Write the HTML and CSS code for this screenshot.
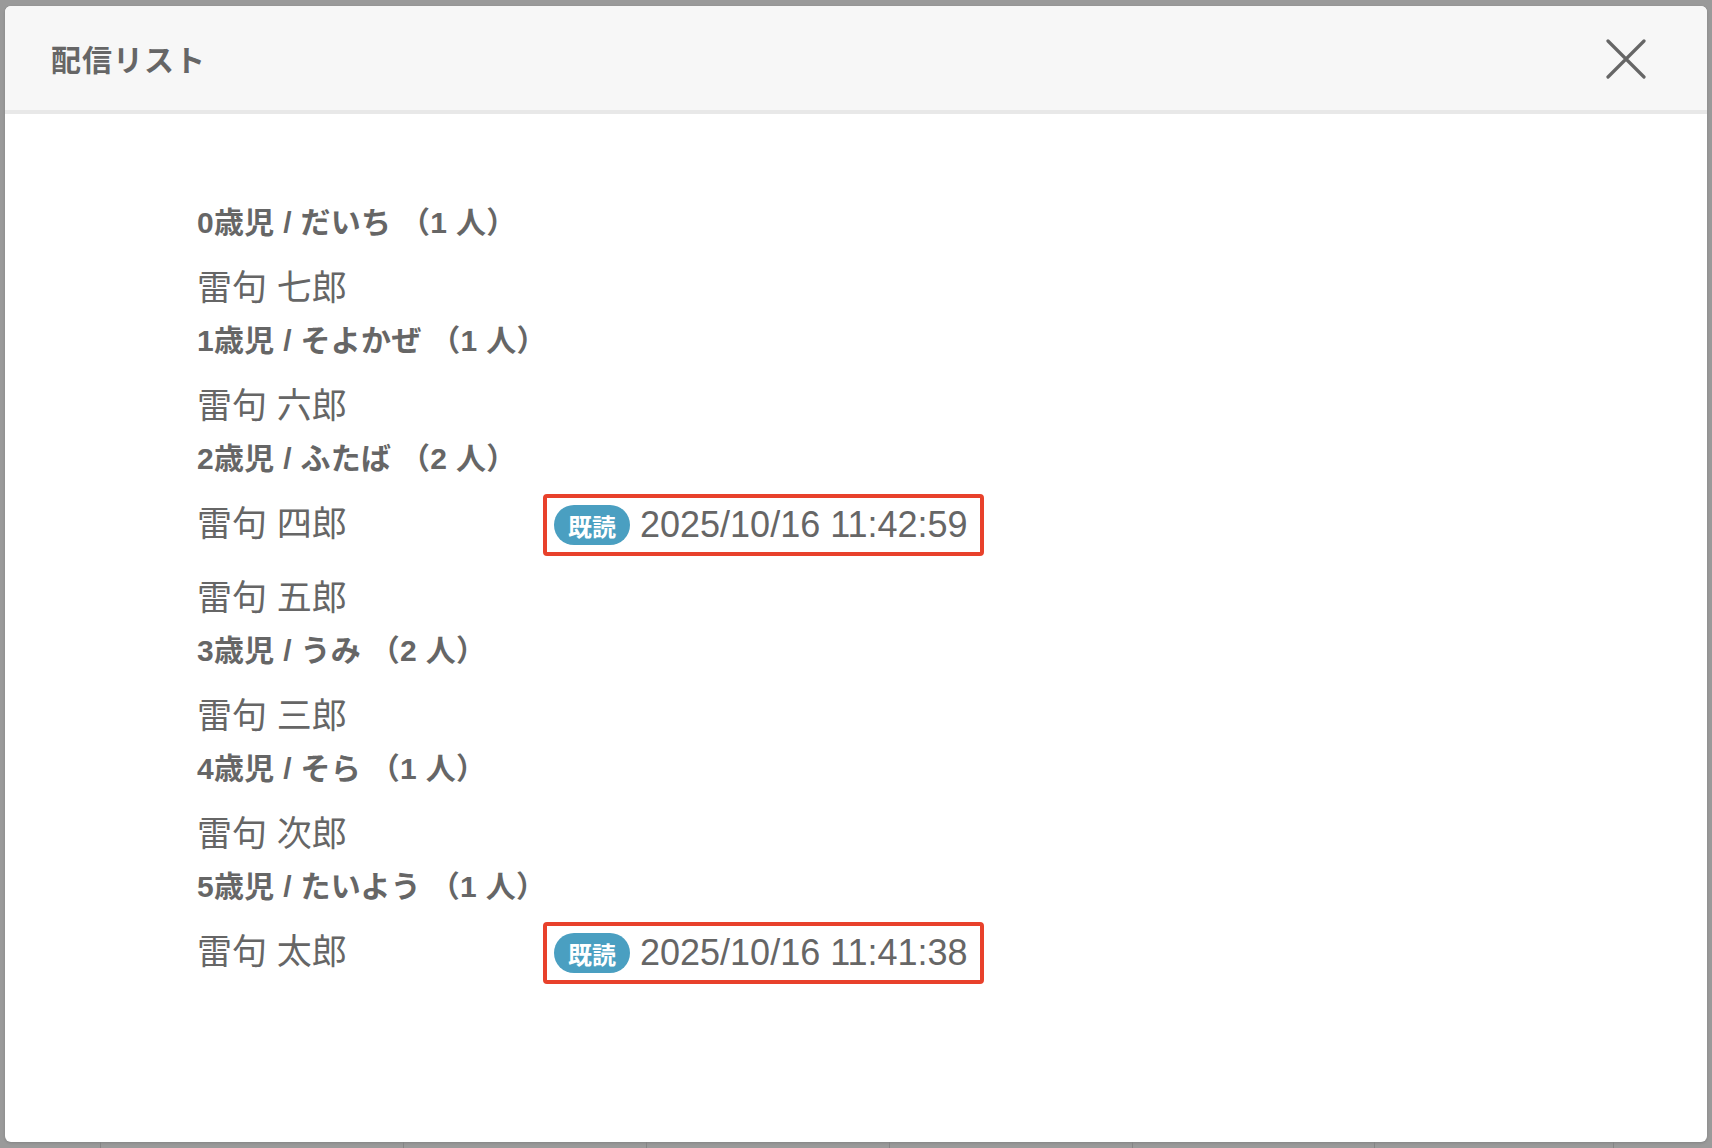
FILE: index.html
```html
<!DOCTYPE html>
<html lang="ja">
<head>
  <meta charset="UTF-8" />
  <title>配信リスト</title>
  <link rel="stylesheet" href="styles.css">
</head>
<body>
  <!-- Modal -->
  <div class="modal">
    <div class="modal-header">
      <div class="modal-title">配信リスト</div>
      <button class="close-btn" title="閉じる">
        <svg width="40" height="40" viewBox="0 0 40 40">
          <path d="M2 2 L38 38 M38 2 L2 38" stroke="#666" stroke-width="3.2" stroke-linecap="round" fill="none" />
        </svg>
      </button>
    </div>

    <div class="modal-body">
      <div class="group">
        <div class="group-title">0歳児 / だいち （1 人）</div>
        <div class="member"><span class="member-name">雷句 七郎</span></div>
      </div>

      <div class="group">
        <div class="group-title">1歳児 / そよかぜ （1 人）</div>
        <div class="member"><span class="member-name">雷句 六郎</span></div>
      </div>

      <div class="group">
        <div class="group-title">2歳児 / ふたば （2 人）</div>
        <div class="member">
          <span class="member-name">雷句 四郎</span>
          <span class="read-box"><span class="read-badge">既読</span><span class="read-date">2025/10/16 11:42:59</span></span>
        </div>
        <div class="member"><span class="member-name">雷句 五郎</span></div>
      </div>

      <div class="group">
        <div class="group-title">3歳児 / うみ （2 人）</div>
        <div class="member"><span class="member-name">雷句 三郎</span></div>
      </div>

      <div class="group">
        <div class="group-title">4歳児 / そら （1 人）</div>
        <div class="member"><span class="member-name">雷句 次郎</span></div>
      </div>

      <div class="group">
        <div class="group-title">5歳児 / たいよう （1 人）</div>
        <div class="member">
          <span class="member-name">雷句 太郎</span>
          <span class="read-box"><span class="read-badge">既読</span><span class="read-date">2025/10/16 11:41:38</span></span>
        </div>
      </div>
    </div>
  </div>

  <!-- table behind the overlay -->
  <div class="under-table">
    <div class="under-cell first"></div>
    <div class="under-cell" style="width: 303px"></div>
    <div class="under-cell" style="width: 243px"></div>
    <div class="under-cell" style="width: 243px"></div>
    <div class="under-cell" style="width: 243px"></div>
    <div class="under-cell" style="width: 242px"></div>
    <div class="under-cell" style="width: 239px"></div>
    <div class="under-cell last"></div>
  </div>
</body>
</html>
```

FILE: styles.css
```css
html, body {
  margin: 0;
  height: 100%;
}
body {
  background: #9a9a9a;
  font-family: 'Liberation Sans', 'Noto Sans CJK JP', sans-serif;
  color: #666;
  padding-top: 6px;
  box-sizing: border-box;
  overflow: hidden;
}
.modal {
  width: 1702px;
  height: 1136px;
  margin-left: 5px;
  background: #fff;
  border-radius: 6px;
  overflow: hidden;
  box-shadow: 0 1px 3px rgba(0,0,0,0.15);
}
.modal-header {
  height: 104px;
  background: #f7f7f7;
  border-bottom: 4px solid #e8e8e8;
  display: flex;
  align-items: center;
  justify-content: space-between;
  padding: 0 61px 0 46px;
}
.modal-title {
  font-size: 30px;
  font-weight: bold;
  color: #666;
  letter-spacing: 1px;
}
.close-btn {
  background: none;
  border: none;
  padding: 0;
  width: 40px;
  height: 40px;
  cursor: pointer;
  margin-top: 2px;
}
.close-btn svg {
  display: block;
}
.modal-body {
  padding: 88px 0 0 192px;
}
.group-title {
  font-size: 30px;
  font-weight: bold;
  line-height: 42px;
  margin-bottom: 14px;
  letter-spacing: 0.3px;
}
.member {
  display: flex;
  align-items: center;
  height: 62px;
}
.member + .member {
  margin-top: 12px;
}
.member-name {
  width: 346px;
  font-size: 35px;
  line-height: 1.2;
  padding-bottom: 2px;
}
.read-box {
  display: flex;
  align-items: center;
  box-sizing: border-box;
  width: 441px;
  height: 62px;
  border: 4px solid #e8412b;
  border-radius: 4px;
  padding: 0 7px;
}
.read-badge {
  display: inline-flex;
  align-items: center;
  justify-content: center;
  width: 76px;
  height: 40px;
  border-radius: 20px;
  background: #4a9fc1;
  color: #fff;
  font-size: 24px;
  font-weight: bold;
}
.read-date {
  margin-left: 10px;
  font-size: 36px;
  color: #666;
}
.under-table {
  display: flex;
  height: 6px;
}
.under-cell {
  height: 6px;
  border-left: 1px solid #858585;
  box-sizing: border-box;
}
.under-cell.first {
  width: 100px;
  border-left: none;
}
.under-cell.last {
  flex: 1;
}
```
